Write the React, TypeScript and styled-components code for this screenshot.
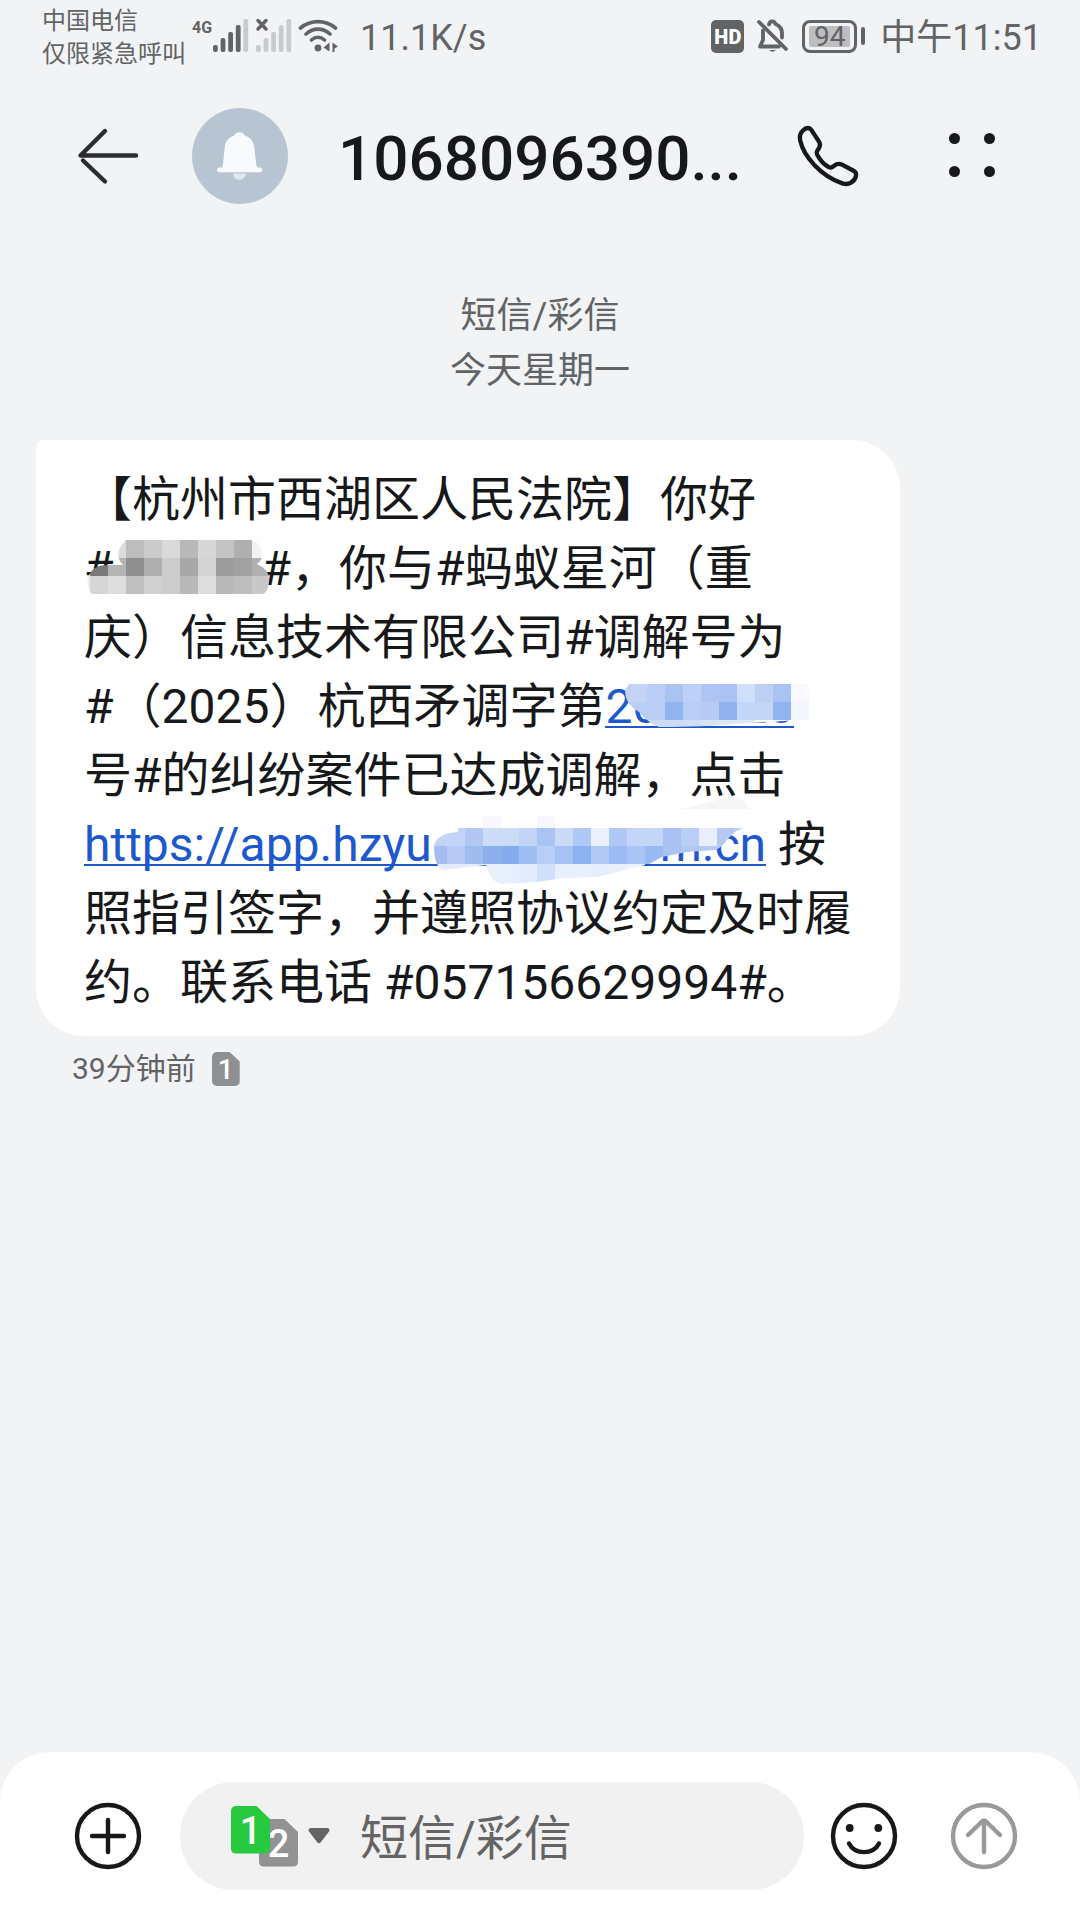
import React from "react";
import styled, { createGlobalStyle } from "styled-components";

const ink = "#17181a";
const muted = "#626365";
const linkBlue = "#1d59cc";

const GlobalStyle = createGlobalStyle`
  * { box-sizing: border-box; }
  body {
    margin: 0;
    background: #f1f3f5;
    color: ${ink};
    font-family: Roboto, "Noto Sans CJK SC", sans-serif;
    text-spacing-trim: space-all;
  }
  button, input { font: inherit; color: inherit; }
`;

const Screen = styled.div`
  min-height: 100vh;
  display: flex;
  flex-direction: column;
`;

const StatusBar = styled.div`
  display: flex;
  justify-content: space-between;
  padding: 1px 38px 0 42px;
  color: ${muted};
`;

const StatusGroup = styled.div<{ $gap: number }>`
  display: flex;
  align-items: center;
  gap: ${(p) => p.$gap}px;
  height: 70px;
`;

const Carrier = styled.div`
  padding-top: 4px;
  font-size: 24px;
  line-height: 33px;
  white-space: nowrap;
`;

const Signals = styled.div`
  display: flex;
  align-items: flex-start;
  height: 34px;
`;

const NetworkType = styled.span`
  font-size: 16px;
  font-weight: 700;
  line-height: 18px;
`;

const StatusText = styled.span`
  padding-top: 4px;
  font-size: 36px;
  line-height: 42px;
  white-space: nowrap;
`;

const NetworkSpeed = styled(StatusText)`
  margin-left: 14px;
`;

const HdBadge = styled.span`
  width: 33px;
  height: 33px;
  border-radius: 5px;
  background: ${muted};
  color: #fff;
  font-size: 20px;
  font-weight: 900;
  line-height: 34px;
  text-align: center;
`;

const Battery = styled.span`
  display: flex;
  align-items: center;
  gap: 4px;
  margin-right: 2px;
`;

const BatteryCase = styled.span`
  width: 55px;
  height: 33px;
  padding: 3px 4px;
  border: 3px solid ${muted};
  border-radius: 8px;
`;

const BatteryLevel = styled.span`
  display: block;
  width: 41px;
  height: 21px;
  border-radius: 2px;
  background: #bdbec0;
  font-size: 28px;
  line-height: 22px;
  text-align: center;
`;

const BatteryTip = styled.span`
  width: 4px;
  height: 18px;
  border-radius: 2px;
  background: ${muted};
`;

const Header = styled.header`
  display: flex;
  align-items: center;
  padding: 37px 72px 0;
`;

const IconButton = styled.button`
  display: flex;
  align-items: center;
  justify-content: center;
  flex: none;
  width: 72px;
  height: 72px;
  padding: 0;
  border: 0;
  background: none;
`;

const Avatar = styled.div`
  flex: none;
  width: 96px;
  height: 96px;
  margin: 0 50px 0 48px;
  border-radius: 50%;
  background: #b7c4d1;
`;

const Title = styled.h1`
  flex: 1;
  min-width: 0;
  margin: 0;
  padding-top: 6px;
  font-size: 62px;
  font-weight: 500;
  line-height: 72px;
  white-space: nowrap;
`;

const Actions = styled.div`
  display: flex;
  gap: 72px;
`;

const Thread = styled.main`
  flex: 1;
  padding: 85px 36px 40px;
`;

const DayLabel = styled.div`
  margin-bottom: 41px;
  color: ${muted};
  font-size: 36px;
  line-height: 55px;
  text-align: center;
`;

const Bubble = styled.p`
  width: calc(100% - 144px);
  margin: 0;
  padding: 25px 44px 19px 48px;
  border-radius: 8px 48px 48px 48px;
  background: #fff;
  font-size: 48px;
  line-height: 69px;
`;

const Link = styled.a`
  color: ${linkBlue};
  text-decoration: none;
  background: linear-gradient(${linkBlue}, ${linkBlue}) 0 48px / 100% 2px no-repeat;
`;

const Mask = styled.span<{ $width: number }>`
  position: relative;
  display: inline-block;
  width: ${(p) => p.$width}px;
  height: 45px;
`;

const Mosaic = styled.svg<{ $left: number }>`
  position: absolute;
  top: 0;
  left: ${(p) => p.$left}px;
  overflow: visible;
`;

const Meta = styled.div`
  display: flex;
  align-items: center;
  gap: 16px;
  padding: 14px 36px;
  color: ${muted};
  font-size: 30px;
  line-height: 38px;
`;

const SimCard = styled.span<{ $color: string; $large?: boolean }>`
  display: block;
  width: ${(p) => (p.$large ? 39 : 28)}px;
  height: ${(p) => (p.$large ? 48 : 34)}px;
  border-radius: 5px;
  background: ${(p) => p.$color};
  clip-path: polygon(0 0, 64% 0, 100% 28%, 100% 100%, 0 100%);
  color: #fff;
  font-size: ${(p) => (p.$large ? 38 : 28)}px;
  font-weight: 500;
  line-height: ${(p) => (p.$large ? 51 : 35)}px;
  text-align: center;
`;

const Composer = styled.form`
  display: flex;
  align-items: center;
  padding: 30px 60px 30px 72px;
  border-radius: 50px 50px 0 0;
  background: #fff;
`;

const Field = styled.div`
  display: flex;
  align-items: center;
  flex: 1;
  min-width: 0;
  height: 108px;
  margin: 0 24px 0 36px;
  padding: 0 48px 0 51px;
  border-radius: 54px;
  background: #f1f1f1;
`;

const SimPicker = styled.button`
  display: flex;
  align-items: center;
  gap: 10px;
  padding: 0;
  border: 0;
  background: none;
`;

const SimStack = styled.span`
  display: grid;
  grid-template-columns: 28px 11px 28px;
  grid-template-rows: 13px 35px 13px;

  > :first-child { grid-area: 1 / 1 / 3 / 3; z-index: 1; }
  > :last-child { grid-area: 2 / 2 / 4 / 4; }
`;

const MessageInput = styled.input`
  flex: 1;
  min-width: 0;
  height: 72px;
  margin-left: 30px;
  padding: 4px 0 0;
  border: 0;
  outline: 0;
  background: none;
  font-size: 48px;

  &::placeholder { color: #646464; opacity: 1; }
`;

const Spacer = styled.span`
  width: 48px;
  flex: none;
`;

function SignalBars({ lit, noService }: { lit: number; noService?: boolean }) {
  return (
    <svg width="37" height="34" viewBox="-1 0 37 34" aria-hidden="true">
      {[7, 14, 20, 27, 33].map((h, i) => (
        <rect key={h} x={i * 7.6} y={33 - h} width="4.8" height={h} rx="2" fill={i < lit ? muted : "#c9cacc"} />
      ))}
      {noService && <path d="M2 1.5 10 10M10 1.5 2 10" stroke={muted} strokeWidth="3.4" strokeLinecap="round" />}
    </svg>
  );
}

const CELL = 18;

type MosaicRow = { y: number; h?: number; colors: string[] };

function MosaicCells({ x, rows }: { x: number; rows: MosaicRow[] }) {
  return (
    <g shapeRendering="crispEdges">
      {rows.map((row) =>
        row.colors.map((c, i) => (
          <rect key={`${row.y}-${i}`} x={x + i * CELL} y={row.y} width={CELL} height={row.h ?? CELL} fill={`#${c}`} />
        ))
      )}
    </g>
  );
}

const nameRows: MosaicRow[] = [
  { y: 0, colors: "f0f0f0 dcdcdc bdbdbd cbcbcb dadada b9b9b9 d7d7d7 c3c3c3 afafaf f2f2f2 f2f2f2".split(" ") },
  { y: 18, colors: "7a7a7a b4b4b4 8f8f8f afafaf cdcdcd a8a8a8 d4d4d4 9c9c9c a1a1a1 b0b0b0".split(" ") },
  { y: 36, colors: "d6d6d6 dedede bfbfbf d1d1d1 cccccc b9b9b9 dedede b9b9b9 bebebe c8c8c8".split(" ") },
];

const caseRows: MosaicRow[] = [
  { y: 6, colors: "c4d3f5 b9cdf6 aac4f2 bcd1f7 afc5f3 aac3f3 cfdffa bccff4 a9c4f3 f7f9ff".split(" ") },
  { y: 24, colors: "b9cdf5 b9cdf5 91b3ef b8cef6 b7cbf5 90b2ef c3d7f8 c4d6f6 90b4f0 f3f6fe".split(" ") },
  { y: 42, h: 8, colors: "d3e1f9 ccdcf8 ccdcf8 d0dff8 d6e3fa dde8fb dde8fb ffffff ffffff ffffff".split(" ") },
];

const urlRows: MosaicRow[] = [
  { y: 12, colors: "c3d3f5 c3d3f5 b1c8f5 ccdbf6 ccdbf6 c2d4f6 a9c4f3 cbdaf7 b0c8f5 ebf0fc b0c8f5 c4d6f8 c5d7f8 a9c1f2 b8cef6 e8eefb b5c9f1 c0d0f0".split(" ") },
  { y: 30, colors: "a4bdf0 b9cbf5 9fbcf1 8db0ec 86aced a0bef3 b7cff8 a6c1f4 8db2f1 b3c8f4 9abbf3 aac4f4 9bb9f2 aac3f3 b0c8f4 b5c9f1 b5c9f1".split(" ") },
  { y: 48, h: 24, colors: "e4ecfb e4ecfb e4ecfb e7effd e7effd e2ecfc d0dffa e6effd e8f0fd e4edfc e8f0fd edf3fe".split(" ") },
];

export default function App() {
  return (
    <Screen lang="zh-CN">
      <GlobalStyle />
      <StatusBar>
        <StatusGroup $gap={6}>
          <Carrier>
            中国电信
            <br />
            仅限紧急呼叫
          </Carrier>
          <Signals>
            <NetworkType>4G</NetworkType>
            <SignalBars lit={4} />
          </Signals>
          <Signals>
            <SignalBars lit={0} noService />
          </Signals>
          <svg width="42" height="34" viewBox="0 0 42 34" fill="none" stroke={muted} strokeWidth="3.6" strokeLinecap="round" aria-hidden="true">
            <path d="M2.5 9C13 .5 27 .5 37.5 9M8 15C15.5 8.5 24.5 8.5 32 15M13.5 21C17.5 17.5 22.5 17.5 26.5 21" />
            <circle cx="20" cy="29" r="3.4" fill={muted} stroke="none" />
            <path d="M31.5 23.5V32.5L25.5 28.5ZM34.5 23.5 40 27.5 36.5 29.5V33H34.5Z" fill={muted} stroke="none" />
          </svg>
          <NetworkSpeed>11.1K/s</NetworkSpeed>
        </StatusGroup>
        <StatusGroup $gap={13}>
          <HdBadge>HD</HdBadge>
          <svg width="32" height="34" viewBox="0 0 32 34" fill="none" stroke={muted} strokeWidth="3.8" strokeLinecap="round" strokeLinejoin="round" aria-hidden="true">
            <path d="M12 5.5C13 1.5 17 1.5 18.5 5C23 7 25 10 25 14V18.5M6 11.5V21L3 27.5H22" />
            <path d="M2 3 29 30" />
            <path d="M12 31H19Q15.5 34.5 12 31Z" fill={muted} stroke="none" />
          </svg>
          <Battery>
            <BatteryCase>
              <BatteryLevel>94</BatteryLevel>
            </BatteryCase>
            <BatteryTip />
          </Battery>
          <StatusText>中午11:51</StatusText>
        </StatusGroup>
      </StatusBar>

      <Header>
        <IconButton type="button" aria-label="返回">
          <svg width="62" height="58" viewBox="0 0 62 58" fill="none" stroke="#2b2c2e" strokeWidth="4.4" strokeLinecap="round" strokeLinejoin="round">
            <path d="M28 4 3.5 28.5H59" />
            <path d="M6 33.5 28 54.5" />
          </svg>
        </IconButton>
        <Avatar>
          <svg width="96" height="96" viewBox="0 0 96 96" aria-hidden="true">
            <path d="M41 65.5H54Q53 72 47.5 72T41 65.5Z" fill="#dfe8f2" />
            <path d="M27 59.5H30Q31 58 31.2 54L32.8 39C33.4 33 37 29.5 42 27.5C44.5 23 50.5 23 53 27.5C58 29.5 61.6 33 62.2 39L64 54Q64.3 58 65.3 59.5H68Q70.5 60 70.5 62T68 64.2H27Q24.8 64 24.8 62T27 59.5Z" fill="#f8fbfe" />
          </svg>
        </Avatar>
        <Title>1068096390...</Title>
        <Actions>
          <IconButton type="button" aria-label="拨打电话">
            <svg width="66" height="66" viewBox="768 96 198 198" fill="none" stroke={ink} strokeWidth="13" strokeLinejoin="round">
              <path d="M807 111C812 111 815 114 818 118L840 152C844 158 844 163 841 169L834 181C832 185 833 188 835 192C843 207 856 221 869 228C873 230 877 230 880 228L890 221C896 218 903 218 909 221L945 240C950 243 952 248 951 254C950 262 944 270 936 275C928 280 919 280 910 277C880 267 850 247 825 221C805 199 789 172 784 150C781 138 783 127 791 119C796 114 801 111 807 111Z" />
            </svg>
          </IconButton>
          <IconButton type="button" aria-label="更多">
            <svg width="48" height="48" viewBox="0 0 48 48" fill={ink}>
              <circle cx="6.5" cy="6.5" r="5.5" />
              <circle cx="41.5" cy="6.5" r="5.5" />
              <circle cx="6.5" cy="39.5" r="5.5" />
              <circle cx="41.5" cy="39.5" r="5.5" />
            </svg>
          </IconButton>
        </Actions>
      </Header>

      <Thread>
        <DayLabel>
          短信/彩信
          <br />
          今天星期一
        </DayLabel>
        <Bubble>
          【杭州市西湖区人民法院】你好
          <br />#
          <Mask $width={148}>
            <Mosaic $left={-28} width="184" height="54" viewBox="0 0 184 54" aria-hidden="true">
              <clipPath id="nameMask">
                <path d="M40 0H166Q177 4 176 16 176 20 171 24 184 30 183 40 182 54 176 54H6Q0 48 2 38 6 24 24 25H37Q26 14 40 0Z" />
              </clipPath>
              <g clipPath="url(#nameMask)">
                <MosaicCells x={4} rows={nameRows} />
                <rect x="0" y="25" width="4" height="29" fill="#ececec" />
              </g>
            </Mosaic>
          </Mask>
          #，你与#蚂蚁星河（重
          <br />
          庆）信息技术有限公司#调解号为
          <br />
          #（2025）杭西矛调字第
          <Link href="#case">
            20
            <Mask $width={81}>
              <Mosaic $left={-34} width="184" height="50" viewBox="0 0 184 50" aria-hidden="true">
                <clipPath id="caseMask">
                  <path d="M4 6H184V42H166L160 43 110 46Q80 49 34 49 22 44 14 34 0 26 0 12Z" />
                </clipPath>
                <g clipPath="url(#caseMask)">
                  <MosaicCells x={4} rows={caseRows} />
                  <rect x="0" y="6" width="4" height="36" fill="#c4d3f5" />
                </g>
              </Mosaic>
            </Mask>
            20
          </Link>
          <br />
          号#的纠纷案件已达成调解，点击
          <br />
          <Link href="#app">
            https://app.hzyu
            <Mask $width={228}>
              <Mosaic $left={2} width="310" height="72" viewBox="0 0 310 72" aria-hidden="true">
                <clipPath id="urlMask">
                  <path d="M0 29Q4 17 24 16L24 12H309L301 16Q296 20 288 30L282 34 253 36 228 41 215 48 203 51 163 61 130 62 103 66 68 68Q56 66 52 49L10 54Q0 52 0 29Z" />
                </clipPath>
                <path d="M49 0H67V12H49ZM103 0H121V12H103Z" fill="#f6f8fe" />
                <path d="M247 -7 300 -20Q313 -16 315 -7Z" fill="#f6f6f7" />
                <g clipPath="url(#urlMask)">
                  <MosaicCells x={-5} rows={urlRows} />
                </g>
              </Mosaic>
            </Mask>
            m.cn
          </Link>{" "}
          按
          <br />
          照指引签字，并遵照协议约定及时履
          <br />
          约。联系电话 #057156629994#。
        </Bubble>
        <Meta>
          <span>39分钟前</span>
          <SimCard $color="#8f9092">1</SimCard>
        </Meta>
      </Thread>

      <Composer onSubmit={(e: React.FormEvent) => e.preventDefault()}>
        <IconButton type="button" aria-label="添加附件">
          <svg width="68" height="68" viewBox="0 0 68 68" fill="none" stroke={ink} strokeWidth="4.4" strokeLinecap="round">
            <circle cx="34" cy="34" r="31" />
            <path d="M34 18V50M18 34H50" />
          </svg>
        </IconButton>
        <Field>
          <SimPicker type="button" aria-label="选择 SIM 卡">
            <SimStack>
              <SimCard $large $color="#27c93f">1</SimCard>
              <SimCard $large $color="#929292">2</SimCard>
            </SimStack>
            <svg width="22" height="16" viewBox="0 0 22 16" fill="#646464" aria-hidden="true">
              <path d="M2.5 0H19.5Q22.5 1 21 3.5L13 14Q11 16.5 9 14L1 3.5Q-.5 1 2.5 0Z" />
            </svg>
          </SimPicker>
          <MessageInput type="text" aria-label="短信/彩信" placeholder="短信/彩信" />
        </Field>
        <IconButton type="button" aria-label="表情">
          <svg width="68" height="68" viewBox="0 0 68 68" fill="none" stroke={ink} strokeWidth="4.4" strokeLinecap="round">
            <circle cx="34" cy="34" r="31" />
            <path d="M19 41.5C25 53 43 53 49 41.5" />
            <circle cx="19.7" cy="26" r="3.9" fill={ink} stroke="none" />
            <circle cx="48.3" cy="26" r="3.9" fill={ink} stroke="none" />
          </svg>
        </IconButton>
        <Spacer />
        <IconButton type="submit" aria-label="发送">
          <svg width="68" height="68" viewBox="0 0 68 68" fill="none" stroke="#999" strokeWidth="4.4" strokeLinecap="round" strokeLinejoin="round">
            <circle cx="34" cy="34" r="31" />
            <path d="M34 50V19M18 33 32 19.5Q34 17.5 36 19.5L50 33" />
          </svg>
        </IconButton>
      </Composer>
    </Screen>
  );
}
